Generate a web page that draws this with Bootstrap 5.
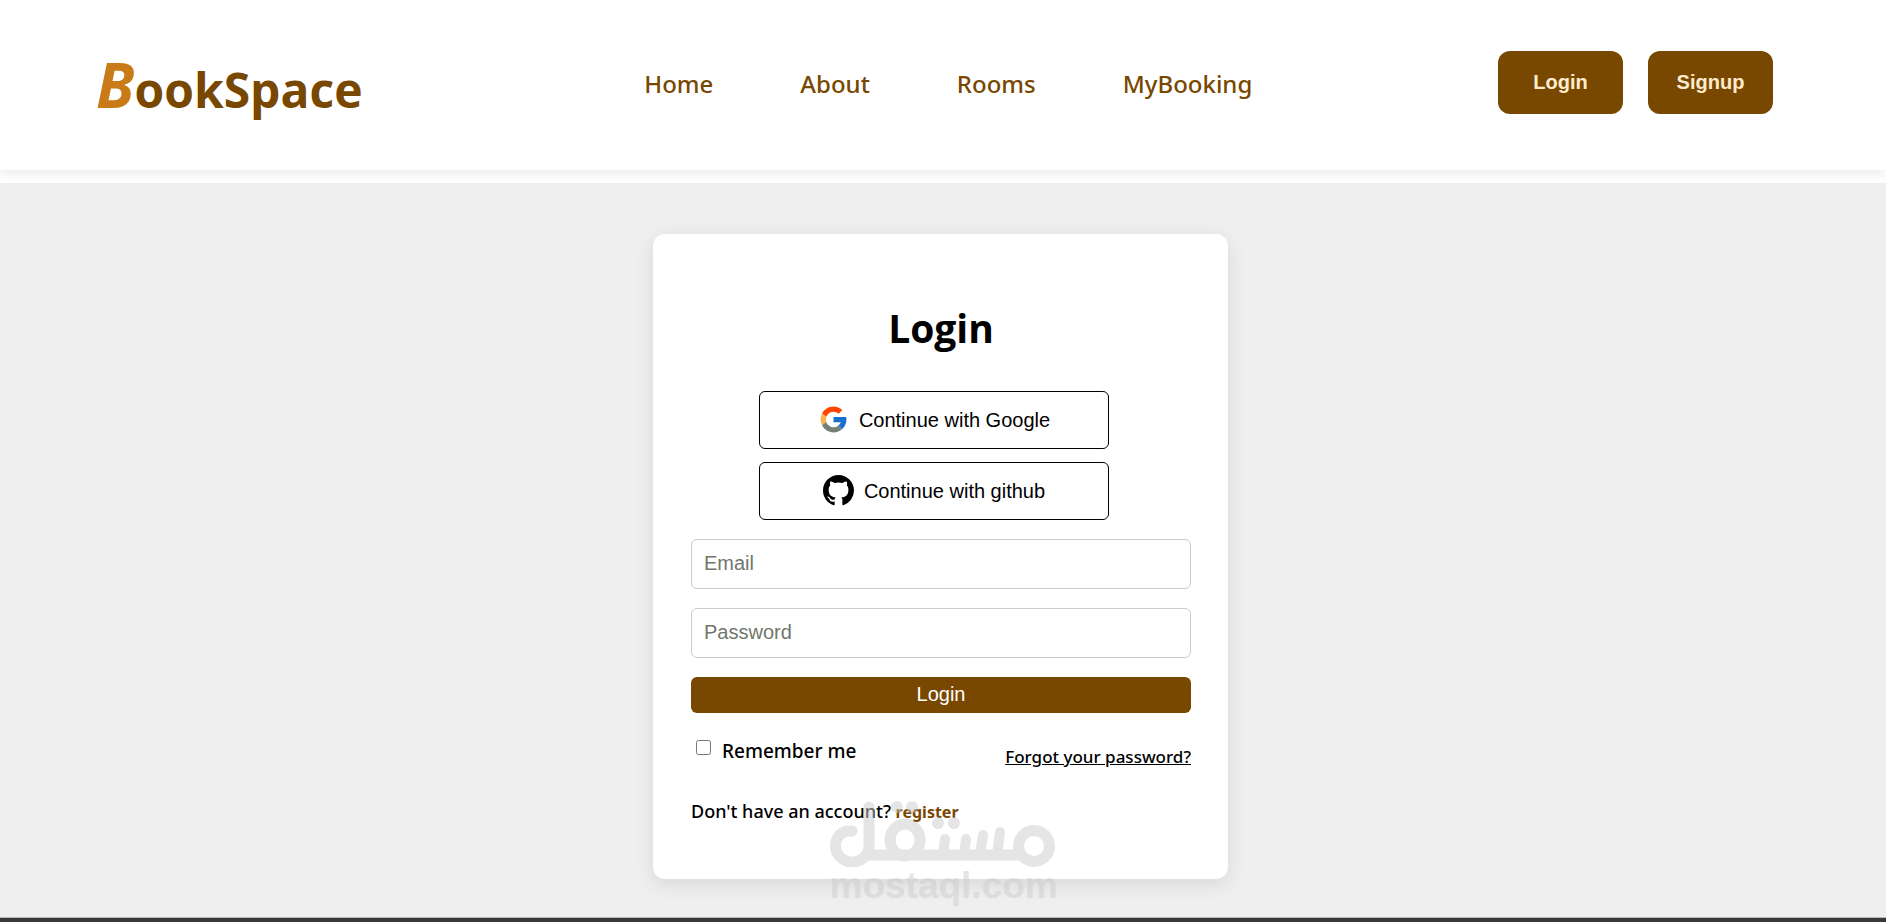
<!DOCTYPE html>
<html lang="en">
<head>
<meta charset="utf-8">
<meta name="viewport" content="width=device-width, initial-scale=1">
<title>BookSpace - Login</title>
<link href="https://cdn.jsdelivr.net/npm/bootstrap@5.3.0/dist/css/bootstrap.min.css" rel="stylesheet">
<style>
  :root { --brand: #784700; --accent: #c87b17; }
  body { font-family: "Open Sans", "Noto Sans", sans-serif; color: #000; background: #fff; }
  .site-header { padding: 51px 113px 56px 96px; box-shadow: 0 5px 10px rgba(0, 0, 0, .07); }
  .brand-name { font-size: 48px; line-height: 60px; font-weight: 700; color: var(--brand); margin: -8px 0; padding-top: 9px; }
  .brand-name:hover { color: var(--brand); }
  .brand-name em { font-size: 62px; line-height: 60px; color: var(--accent); }
  .main-links { gap: 87px; padding: 2px 0 0 36px; }
  .main-links a { font-family: "Noto Sans", "Open Sans", sans-serif; font-size: 24px; line-height: 34px; font-weight: 500; color: var(--brand); }
  .arial { font-family: "Liberation Sans", Arial, sans-serif; }
  .top-actions { gap: 25px; }
  .btn-top { width: 125px; height: 63px; padding: 0 0 2px; border: 0; border-radius: 12px; background: var(--brand); color: #ffebcd; font-size: 20px; font-weight: 700; }
  .login-area { margin-top: 13px; padding: 51px 5px 38px 0; background: #efefef; }
  .login-box { width: 575px; max-width: 100%; padding: 66px 37px 55px 38px; border-radius: 12px; background: #fff; box-shadow: 0 5px 20px rgba(0, 0, 0, .1); }
  .login-box h1 { font-size: 39px; line-height: 56px; font-weight: 700; margin: 0 0 35px; }
  .socials { gap: 13px; padding-right: 14px; margin-bottom: 19px; }
  .btn-social { width: 350px; height: 58px; padding: 0 0 1px; border: 1px solid #000; border-radius: 6px; background: #fff; color: #000; font-size: 20px; }
  .btn-social svg { margin-right: 10px; }
  .field { height: 50px; padding: 0 12px 2px; border: 1px solid #ccc; border-radius: 6px; font-size: 20px; margin-bottom: 19px; }
  .field::placeholder { color: #6f776c; }
  .btn-login { height: 36px; padding: 0 0 2px; border: 0; border-radius: 6px; background: var(--brand); color: #fff; font-size: 20px; line-height: 24px; }
  .options, .signup-line { font-family: "Noto Sans", "Open Sans", sans-serif; }
  .options { margin-top: 24px; }
  .options input { width: 15px; height: 15px; margin: 3px 11px 0 5px; }
  .options label { font-size: 19px; line-height: 28px; font-weight: 500; }
  .options a { font-size: 17px; line-height: 24px; font-weight: 500; color: #000; padding-top: 8px; }
  .signup-line { font-size: 18px; line-height: 24px; font-weight: 500; margin: 30px 0 0; }
  .signup-line a { font-size: 16px; color: var(--brand); font-weight: 700; }
  .stamp { left: 50%; bottom: -26px; margin-left: -111px; width: 226px; color: #cdcdcd; opacity: .5; pointer-events: none; }
  .stamp span { font-size: 37px; line-height: 38px; font-weight: 700; }
  .bottom-edge { height: 5px; background: #38383b; border-top: 1px solid #bbb; }
</style>
</head>
<body class="d-flex flex-column min-vh-100">
<header class="site-header d-flex align-items-center justify-content-between">
  <a href="#" class="brand-name text-decoration-none"><em>B</em>ookSpace</a>
  <nav>
    <ul class="main-links d-flex list-unstyled mb-0">
      <li><a class="text-decoration-none" href="#">Home</a></li>
      <li><a class="text-decoration-none" href="#">About</a></li>
      <li><a class="text-decoration-none" href="#">Rooms</a></li>
      <li><a class="text-decoration-none" href="#">MyBooking</a></li>
    </ul>
  </nav>
  <div class="top-actions d-flex arial">
    <button type="button" class="btn-top">Login</button>
    <button type="button" class="btn-top">Signup</button>
  </div>
</header>

<main class="login-area flex-grow-1 d-flex justify-content-center align-items-start">
  <form class="login-box position-relative" onsubmit="return false">
    <h1 class="text-center">Login</h1>
    <div class="socials d-flex flex-column align-items-center arial">
      <button type="button" class="btn-social d-flex align-items-center justify-content-center">
        <svg width="31" height="31" viewBox="0 0 48 48" aria-hidden="true">
          <path fill="#fbb351" d="M13 28a12 12 0 0 1 0-8.500L6.300 14.700a20 20 0 0 0-.1 18.300z"/>
          <path fill="#ff4500" d="M6.300 14.700l6.600 4.800C14.700 15.100 19 12 24 12c3.100 0 5.800 1.200 8 3.100l5.700-5.700C34 6.100 29.300 4 24 4 16.300 4 9.700 8.300 6.300 14.700z"/>
          <path fill="#757f75" d="M24 44c5.200 0 9.900-2 13.400-5.200l-6.200-5.200A12 12 0 0 1 12.700 28l-6.500 5C9.500 39.600 16.200 44 24 44z"/>
          <path fill="#196fce" d="M43.600 20.100H24v8h11.300a12 12 0 0 1-4.100 5.600l6.200 5.200C37 39.200 44 34 44 24c0-1.300-.1-2.700-.4-3.900z"/>
        </svg>Continue with Google
      </button>
      <button type="button" class="btn-social d-flex align-items-center justify-content-center">
        <svg width="31" height="31" viewBox="0 0 16 16" aria-hidden="true">
          <path d="M8 0C3.580 0 0 3.580 0 8c0 3.540 2.290 6.530 5.470 7.590.4.070.55-.17.55-.38 0-.19-.01-.82-.01-1.490-2.010.37-2.530-.49-2.690-.94-.09-.23-.48-.94-.82-1.130-.28-.15-.68-.52-.01-.53.63-.01 1.080.58 1.230.82.72 1.210 1.870.87 2.330.66.070-.52.28-.87.51-1.070-1.780-.2-3.640-.89-3.640-3.950 0-.87.31-1.590.82-2.150-.08-.2-.36-1.020.08-2.120 0 0 .67-.21 2.200.82.64-.18 1.320-.27 2-.27s1.360.09 2 .27c1.530-1.040 2.200-.82 2.200-.82.44 1.100.16 1.920.08 2.120.51.56.82 1.270.82 2.150 0 3.070-1.870 3.750-3.650 3.950.29.25.54.73.54 1.480 0 1.070-.01 1.930-.01 2.200 0 .21.15.46.55.38A8.010 8.010 0 0 0 16 8c0-4.420-3.580-8-8-8z"/>
        </svg>Continue with github
      </button>
    </div>
    <input class="field arial d-block w-100" type="email" placeholder="Email" aria-label="Email">
    <input class="field arial d-block w-100" type="password" placeholder="Password" aria-label="Password">
    <button type="submit" class="btn-login arial d-block w-100">Login</button>
    <div class="options d-flex justify-content-between align-items-start">
      <div class="d-flex align-items-start">
        <input type="checkbox" id="remember"><label for="remember">Remember me</label>
      </div>
      <a href="#">Forgot your password?</a>
    </div>
    <p class="signup-line">Don't have an account? <a class="text-decoration-none" href="#">register</a></p>

    <div class="stamp position-absolute arial">
      <svg class="d-block" width="226" height="66" viewBox="0 0 226 66" fill="none" stroke="currentColor" stroke-width="11" stroke-linecap="round" aria-hidden="true">
        <path d="M22 30C12 29 5.500 36 5.500 45C5.500 54 13 61 22 61C31 61 39 54 39 45V6M36 54H190"/>
        <ellipse cx="75" cy="39" rx="15" ry="16"/>
        <path stroke-width="10" d="M115 38L113 54M136 38L134 54M153 34L150 54M170 31L167 54"/>
        <circle cx="204" cy="45" r="15.500"/>
        <g fill="currentColor" stroke="none"><circle cx="67" cy="6" r="6"/><circle cx="82" cy="6" r="6"/><circle cx="108" cy="22" r="6"/><circle cx="124" cy="22" r="6"/></g>
      </svg>
      <span class="d-block">mostaql.com</span>
    </div>
  </form>
</main>
<footer class="bottom-edge"></footer>
<script src="https://cdn.jsdelivr.net/npm/bootstrap@5.3.0/dist/js/bootstrap.bundle.min.js"></script>
</body>
</html>
